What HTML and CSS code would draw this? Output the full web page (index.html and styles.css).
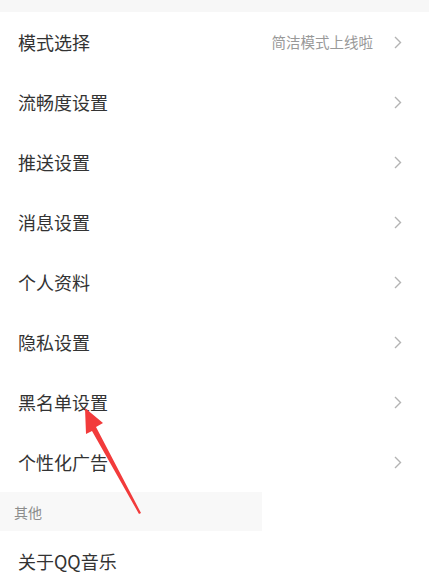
FILE: index.html
```html
<!DOCTYPE html>
<html lang="zh">
<head>
<meta charset="utf-8">
<link rel="stylesheet" href="styles.css">
</head>
<body>
<div class="page">
  <div class="topband"></div>
  <div class="row"><span class="label">模式选择</span><span class="extra">简洁模式上线啦</span><svg class="chev" viewBox="0 0 8 13"><path d="M1 1 L6.5 6.5 L1 12" /></svg></div>
  <div class="row"><span class="label">流畅度设置</span><svg class="chev" viewBox="0 0 8 13"><path d="M1 1 L6.5 6.5 L1 12" /></svg></div>
  <div class="row"><span class="label">推送设置</span><svg class="chev" viewBox="0 0 8 13"><path d="M1 1 L6.5 6.5 L1 12" /></svg></div>
  <div class="row"><span class="label">消息设置</span><svg class="chev" viewBox="0 0 8 13"><path d="M1 1 L6.5 6.5 L1 12" /></svg></div>
  <div class="row"><span class="label">个人资料</span><svg class="chev" viewBox="0 0 8 13"><path d="M1 1 L6.5 6.5 L1 12" /></svg></div>
  <div class="row"><span class="label">隐私设置</span><svg class="chev" viewBox="0 0 8 13"><path d="M1 1 L6.5 6.5 L1 12" /></svg></div>
  <div class="row"><span class="label">黑名单设置</span><svg class="chev" viewBox="0 0 8 13"><path d="M1 1 L6.5 6.5 L1 12" /></svg></div>
  <div class="row"><span class="label">个性化广告</span><svg class="chev" viewBox="0 0 8 13"><path d="M1 1 L6.5 6.5 L1 12" /></svg></div>
  <div class="section"><span>其他</span></div>
  <div class="row"><span class="label">关于QQ音乐</span></div>
  <svg class="arrow" viewBox="0 0 429 581" width="429" height="581">
    <polygon points="85,408 103,423 96,427 141,513 139,514 92,431 86,434" />
  </svg>
</div>
</body>
</html>
```
FILE: styles.css
```css
html, body {
  margin: 0;
  padding: 0;
  background: #ffffff;
}
body {
  font-family: "Noto Sans CJK SC", "Noto Sans", sans-serif;
  width: 429px;
  height: 581px;
  overflow: hidden;
}
.page {
  position: relative;
  width: 429px;
  height: 581px;
  overflow: hidden;
}
.topband {
  height: 12px;
  background: #f7f7f7;
}
.row {
  height: 60px;
  display: flex;
  align-items: center;
  padding: 0 27px 0 18px;
  box-sizing: border-box;
}
.label {
  flex: 1;
  font-size: 18px;
  color: #333333;
  line-height: 1;
}
.extra {
  font-size: 14.5px;
  color: #999999;
  margin-right: 21px;
  line-height: 1;
}
.chev {
  width: 8px;
  height: 13px;
  fill: none;
  stroke: #b3b3b3;
  stroke-width: 1.4;
}
.section {
  width: 262px;
  height: 39px;
  background: #f8f8f8;
  display: flex;
  align-items: center;
  padding-left: 14px;
  box-sizing: border-box;
  font-size: 14px;
  color: #8c8c8c;
}
.arrow {
  position: absolute;
  left: 0;
  top: 0;
  fill: #f23b3b;
}
```
